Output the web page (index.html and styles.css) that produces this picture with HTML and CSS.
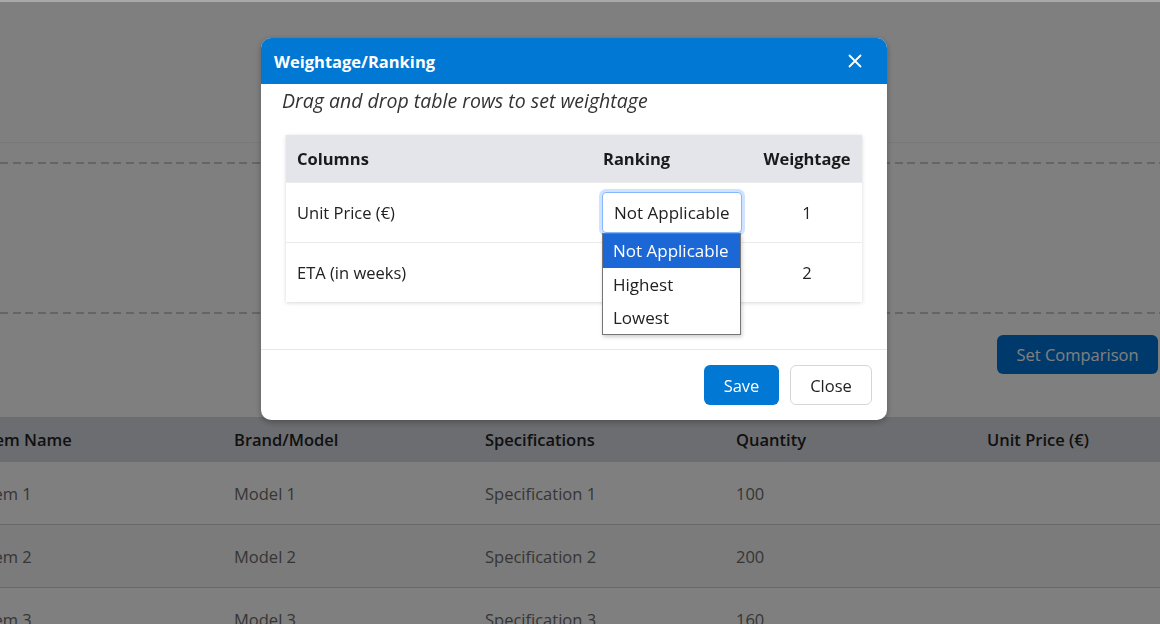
FILE: index.html
```html
<!DOCTYPE html>
<html lang="en">
<head>
  <meta charset="UTF-8">
  <meta name="viewport" content="width=device-width, initial-scale=1.0">
  <title>Comparison - Weightage/Ranking</title>
  <link rel="stylesheet" href="styles.css">
</head>
<body>

<div class="page">
  <div class="topbar"></div>
  <div class="dropzone">
    <div class="dash"></div>
    <div class="dash"></div>
  </div>
  <div class="actions">
    <button class="btn-compare">Set Comparison</button>
  </div>
  <div class="table-scroll">
    <table class="items">
      <thead>
        <tr>
          <th>Item Name</th>
          <th>Brand/Model</th>
          <th>Specifications</th>
          <th>Quantity</th>
          <th>Unit Price (€)</th>
        </tr>
      </thead>
      <tbody>
        <tr><td>Item 1</td><td>Model 1</td><td>Specification 1</td><td>100</td><td></td></tr>
        <tr class="alt"><td>Item 2</td><td>Model 2</td><td>Specification 2</td><td>200</td><td></td></tr>
        <tr><td>Item 3</td><td>Model 3</td><td>Specification 3</td><td>160</td><td></td></tr>
      </tbody>
    </table>
  </div>
</div>

<div class="overlay">
  <div class="modal">
    <div class="modal-header">
      <span class="modal-title">Weightage/Ranking</span>
      <span class="modal-close">
        <svg width="14" height="14" viewBox="0 0 14 14"><path d="M1 1 L13 13 M13 1 L1 13" stroke="#fff" stroke-width="1.8" fill="none"/></svg>
      </span>
    </div>
    <div class="modal-body">
      <p class="hint">Drag and drop table rows to set weightage</p>
      <table class="weights">
        <thead>
          <tr>
            <th class="col-name">Columns</th>
            <th class="col-rank">Ranking</th>
            <th class="col-weight">Weightage</th>
          </tr>
        </thead>
        <tbody>
          <tr>
            <td class="col-name">Unit Price (€)</td>
            <td class="col-rank">
              <div class="select-wrap">
                <div class="select focused">Not Applicable</div>
                <ul class="options">
                  <li class="selected">Not Applicable</li>
                  <li>Highest</li>
                  <li>Lowest</li>
                </ul>
              </div>
            </td>
            <td class="col-weight">1</td>
          </tr>
          <tr>
            <td class="col-name">ETA (in weeks)</td>
            <td class="col-rank"></td>
            <td class="col-weight">2</td>
          </tr>
        </tbody>
      </table>
    </div>
    <div class="modal-footer">
      <button class="btn btn-save">Save</button>
      <button class="btn btn-close">Close</button>
    </div>
  </div>
</div>

</body>
</html>
```

FILE: styles.css
```css
body {
  margin: 0;
  overflow: hidden;
  height: 624px;
  font-family: "Open Sans", "Noto Sans", sans-serif;
  background-color: #fff;
  color: #222;
}
.topbar {
  height: 142px;
  border-bottom: 1px solid #f2f2f2;
}
.dropzone {
  margin-top: 19px;
  height: 152px;
  display: flex;
  flex-direction: column;
  justify-content: space-between;
}
.dash {
  height: 2px;
  background-image: repeating-linear-gradient(90deg, #cacaca 0 8px, transparent 8px 12.6px);
}
.actions {
  display: flex;
  justify-content: flex-end;
  padding-right: 2px;
  margin-top: 21px;
}
.btn-compare {
  height: 39px;
  width: 161px;
  border: none;
  border-radius: 6px;
  background-color: #0074d8;
  color: #fff;
  font-family: inherit;
  font-size: 16.5px;
}
.table-scroll {
  margin-top: 43px;
  overflow: hidden;
}
.items {
  width: 1255px;
  margin-left: -33px;
  border-collapse: collapse;
  table-layout: fixed;
}
.items th,
.items td {
  width: 219px;
  padding: 0 16px;
  text-align: left;
}
.items th {
  height: 45px;
  background-color: #d8dae1;
  color: #222;
  font-size: 16.5px;
  font-weight: 600;
}
.items td {
  height: 62px;
  border-bottom: 1px solid #d2d2d2;
  color: #6c6c6c;
  font-size: 16.5px;
}
.items tr.alt td {
  background-color: #f6f6f6;
}

/* modal */
.overlay {
  position: fixed;
  inset: 0;
  box-sizing: border-box;
  border-top: 2px solid #a9a9a9;
  background-color: rgba(0, 0, 0, 0.5);
}
.modal {
  width: 626px;
  margin: 36px 0 0 261px;
  background-color: #fff;
  border-radius: 10px;
  box-shadow: 0 2px 6px rgba(0, 0, 0, 0.3);
}
.modal-header {
  height: 46px;
  padding: 0 25px 0 13px;
  display: flex;
  align-items: center;
  justify-content: space-between;
  background-color: #0078d4;
  border-radius: 10px 10px 0 0;
}
.modal-title {
  color: #fff;
  font-size: 16.5px;
  font-weight: 700;
}
.modal-close {
  display: flex;
  cursor: pointer;
}
.modal-body {
  padding: 4px 25px 47px;
}
.hint {
  margin: 0 0 21px -4px;
  font-size: 19.5px;
  font-style: italic;
  line-height: 26px;
  color: #333;
}
.weights {
  width: 576px;
  border-collapse: collapse;
  table-layout: fixed;
  box-shadow: 0 1px 4px rgba(0, 0, 0, 0.16);
}
.weights th,
.weights td {
  box-sizing: border-box;
  padding: 0;
}
.weights th {
  height: 47px;
  background-color: #e4e5ea;
  font-size: 16.5px;
  font-weight: 700;
  color: #1a1a1a;
  text-align: left;
}
.weights td {
  height: 60px;
  font-size: 16.5px;
  color: #222;
  border-top: 1px solid #ececec;
}
.col-name {
  width: 305px;
  padding-left: 11px !important;
}
.col-rank {
  width: 161px;
  padding-left: 11px !important;
}
.weights th.col-rank {
  padding-left: 12px !important;
}
.col-weight {
  width: 110px;
  text-align: center !important;
}
.select-wrap {
  position: relative;
  width: 140px;
}
.select {
  box-sizing: border-box;
  height: 41px;
  padding: 0 11px;
  display: flex;
  align-items: center;
  border: 1px solid #86b7fe;
  border-radius: 4px;
  box-shadow: 0 0 0 3px rgba(13, 110, 253, 0.2);
  background-color: #fff;
  font-size: 17px;
}
.options {
  position: absolute;
  top: 41px;
  left: 0;
  width: 139px;
  margin: 0;
  padding: 0;
  list-style: none;
  background-color: #fff;
  border: 1px solid #767676;
  box-sizing: border-box;
  box-shadow: 1px 2px 4px rgba(0, 0, 0, 0.2);
  z-index: 2;
}
.options li {
  height: 33px;
  padding: 0 10px;
  display: flex;
  align-items: center;
  font-size: 17px;
  color: #222;
}
.options li.selected {
  height: 34px;
  background-color: #1c67d6;
  color: #fff;
}
.modal-footer {
  border-top: 1px solid #e6e6ee;
  padding: 15px 15px 15px;
  display: flex;
  justify-content: flex-end;
  gap: 11px;
}
.btn {
  height: 40px;
  border-radius: 6px;
  font-family: inherit;
  font-size: 16.5px;
  cursor: pointer;
}
.btn-save {
  width: 75px;
  border: none;
  background-color: #0078d4;
  color: #fff;
}
.btn-close {
  width: 82px;
  border: 1px solid #d6d6d6;
  background-color: #fff;
  color: #222;
}
```
